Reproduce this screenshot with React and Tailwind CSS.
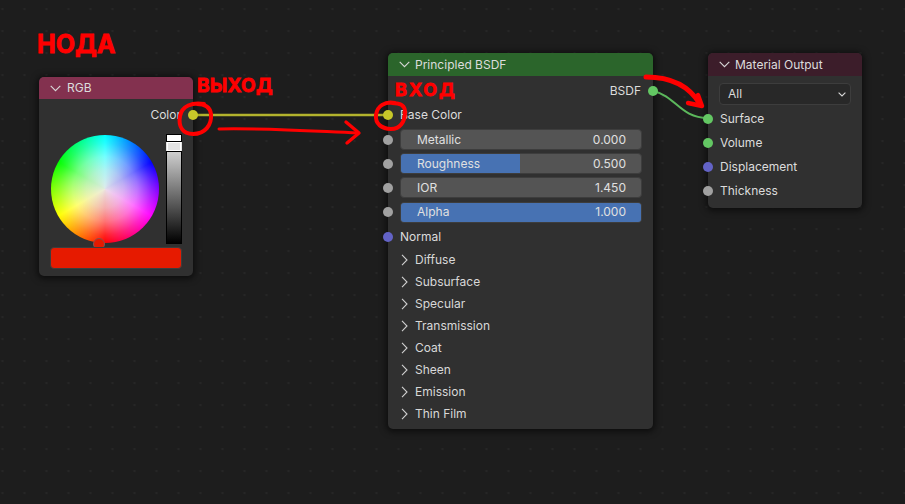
import React from "react";

const Chevron = ({ dir = "down" }) =>
  dir === "down" ? (
    <svg width="11" height="7" viewBox="0 0 11 7" className="shrink-0">
      <polyline points="0.7,0.8 5.5,5.6 10.3,0.8" fill="none" stroke="#d8d8d8" strokeWidth="1.1" />
    </svg>
  ) : (
    <svg width="7" height="12" viewBox="0 0 7 12" className="shrink-0">
      <polyline points="1,0.8 6,6 1,11.2" fill="none" stroke="#d0d0d0" strokeWidth="1.1" />
    </svg>
  );

const socketColors = {
  gray: "bg-[#a1a1a1]",
  purple: "bg-[#6363c7]",
  green: "bg-[#63c763]",
  yellow: "bg-[#c7c729]",
};

const Socket = ({ color, side }) => (
  <span
    className={`absolute top-1/2 -translate-y-1/2 size-[10px] rounded-full ${socketColors[color]} ${
      side === "left" ? "left-[-5px]" : "right-[-5px]"
    }`}
  />
);

const Header = ({ title, className, gap = "gap-[5px]" }) => (
  <div className={`flex items-center pl-[11px] rounded-t-[5px] ${gap} ${className}`}>
    <Chevron />
    <span className="text-[12px] text-[#dcdcdc]">{title}</span>
  </div>
);

const Node = ({ className, children }) => (
  <div className={`absolute rounded-[5px] bg-[#303030] shadow-[0_1px_6px_2px_rgba(0,0,0,0.55)] ${className}`}>
    {children}
  </div>
);

const SocketRow = ({ label, color, side = "left", h = "h-[24.2px]" }) => (
  <div className={`relative flex items-center text-[12px] text-[#dcdcdc] ${h} ${side === "left" ? "justify-start pl-[12px]" : "justify-end pr-[12px]"}`}>
    <Socket color={color} side={side} />
    {label}
  </div>
);

const Slider = ({ label, value, fill, color = "gray" }) => (
  <div className="relative h-[24.2px] flex items-center px-[11.5px]">
    <Socket color={color} side="left" />
    <div className="relative flex-1 h-[21px] rounded-[4px] bg-[#545454] border border-[#3d3d3d] overflow-hidden flex items-center justify-between pl-[16.5px] pr-[14.5px] text-[12px] text-[#e0e0e0]">
      {fill > 0 && <div className="absolute inset-y-0 left-0 bg-[#4772b3]" style={{ width: `${fill}%` }} />}
      <span className="relative">{label}</span>
      <span className="relative">{value}</span>
    </div>
  </div>
);

const Panel = ({ label }) => (
  <div className="flex items-center h-[22px] pl-[13px] gap-[7px] text-[12px] text-[#d8d8d8]">
    <Chevron dir="right" />
    {label}
  </div>
);

const annot = "absolute z-20 font-bold text-[#ff0000] leading-none whitespace-nowrap [-webkit-text-stroke:0.8px_#ff0000]";

export default function App() {
  return (
    <div
      className="relative w-[905px] h-[504px] overflow-hidden bg-[#1d1d1d] bg-[radial-gradient(circle,#262626_1px,transparent_1.6px)] bg-[size:22px_22px] bg-[position:-8.5px_-2px]"
      style={{ fontFamily: "Inter, 'Liberation Sans', sans-serif" }}
    >
      {/* links */}
      <svg className="absolute inset-0" width="905" height="504" viewBox="0 0 905 504">
        <line x1="193" y1="115" x2="388" y2="115" stroke="#b3b32d" strokeWidth="2.4" />
        <path d="M653 91 C 676 96, 680 118, 708 118" fill="none" stroke="#5cb85c" strokeWidth="2" />
      </svg>

      {/* RGB */}
      <Node className="left-[39px] top-[77px] w-[154px] h-[199px]">
        <Header title="RGB" gap="gap-[6px]" className="h-[22px] bg-[#83314f]" />
        <div className="h-[4px]" />
        <SocketRow label="Color" color="yellow" side="right" />
        <div className="flex justify-between pl-[12px] pr-[11px] pt-[7px]">
          <div className="relative size-[108px] mt-px">
            <div
              className="size-full rounded-full"
              style={{
                background:
                  "radial-gradient(circle closest-side, rgba(235,235,235,0.95) 0%, rgba(240,240,240,0.72) 35%, rgba(255,255,255,0.45) 60%, rgba(255,255,255,0.14) 85%, rgba(255,255,255,0) 100%), conic-gradient(from 0deg, #00ffff, #0000ff 60deg, #ff00ff 120deg, #ff0000 180deg, #ffff00 240deg, #00ff00 300deg, #00ffff)",
              }}
            />
            <span className="absolute left-[42px] top-[103px] size-[12px] rounded-full bg-[#e61a00] border border-[#8a5050]" />
          </div>
          <div className="flex flex-col w-[16px] h-[110px] border border-black">
            <div className="h-[6px] bg-white" />
            <div className="h-[11px] -mx-px bg-[#e3e3e3] border border-x-0 border-black outline-1 -outline-offset-2 outline-white" />
            <div className="flex-1 bg-[linear-gradient(to_bottom,#cfcfcf,#000000)]" />
          </div>
        </div>
        <div className="relative mx-[11px] mt-[3px] h-[22px] rounded-[4px] bg-[#e61a00] border border-[#3d3d3d]" />
      </Node>

      {/* Principled BSDF */}
      <Node className="left-[388px] top-[53px] w-[265px] h-[376px]">
        <Header title="Principled BSDF" className="h-[23px] bg-[#2b652b]" />
        <div className="h-[3.3px]" />
        <SocketRow label="BSDF" color="green" side="right" h="h-[24px]" />
        <SocketRow label="Base Color" color="yellow" />
        <Slider label="Metallic" value="0.000" fill={0} />
        <Slider label="Roughness" value="0.500" fill={49.6} />
        <Slider label="IOR" value="1.450" fill={0} />
        <Slider label="Alpha" value="1.000" fill={100} />
        <div className="h-[0.3px]" />
        <SocketRow label="Normal" color="purple" />
        {["Diffuse", "Subsurface", "Specular", "Transmission", "Coat", "Sheen", "Emission", "Thin Film"].map((p) => (
          <Panel key={p} label={p} />
        ))}
      </Node>

      {/* Material Output */}
      <Node className="left-[708px] top-[53px] w-[154px] h-[155px]">
        <Header title="Material Output" className="h-[23px] bg-[#3c1d2a]" />
        <div className="mx-[11px] mt-[7px] h-[22px] rounded-[4px] bg-[#282828] border border-[#3d3d3d] flex items-center justify-between pl-[8px] pr-[4px] text-[12px] text-[#dcdcdc]">
          All
          <svg width="8" height="5" viewBox="0 0 8 5">
            <polyline points="0.6,0.6 4,4 7.4,0.6" fill="none" stroke="#d8d8d8" strokeWidth="1.1" />
          </svg>
        </div>
        <div className="h-[2px]" />
        <SocketRow label="Surface" color="green" h="h-[24px]" />
        <SocketRow label="Volume" color="green" h="h-[24px]" />
        <SocketRow label="Displacement" color="purple" h="h-[24px]" />
        <SocketRow label="Thickness" color="gray" h="h-[24px]" />
      </Node>

      {/* red annotations */}
      <svg className="absolute inset-0 z-20" width="905" height="504" viewBox="0 0 905 504" fill="none" stroke="#ff0000" strokeLinecap="round" strokeLinejoin="round">
        <path d="M204 104 C192 102 182 106 180 116 C178 127 183 134 193 134 C205 134 212 125 211 114 C210 107 205 104 197 104" strokeWidth="4" />
        <path d="M395 103 C385 101 377 106 376 115 C375 124 382 129 391 129 C400 129 405 122 405 112 C405 105 400 103 392 103" strokeWidth="4" />
        <path d="M219 129 C265 128 310 131 358 133" strokeWidth="3" />
        <path d="M346 122 L359 133 L347 143" strokeWidth="3.4" />
        <path d="M646 77 C668 77 688 84 700 104" strokeWidth="5" />
        <path d="M688 103 L702 106 L698 95" strokeWidth="4.4" />
      </svg>
      <span className={`${annot} left-[37px] top-[32px] text-[25px] tracking-[0px]`}>НОДА</span>
      <span className={`${annot} left-[197px] top-[76px] text-[19px] tracking-[0.3px]`}>ВЫХОД</span>
      <span className={`${annot} left-[395px] top-[81px] text-[18px] tracking-[2px]`}>ВХОД</span>
    </div>
  );
}
